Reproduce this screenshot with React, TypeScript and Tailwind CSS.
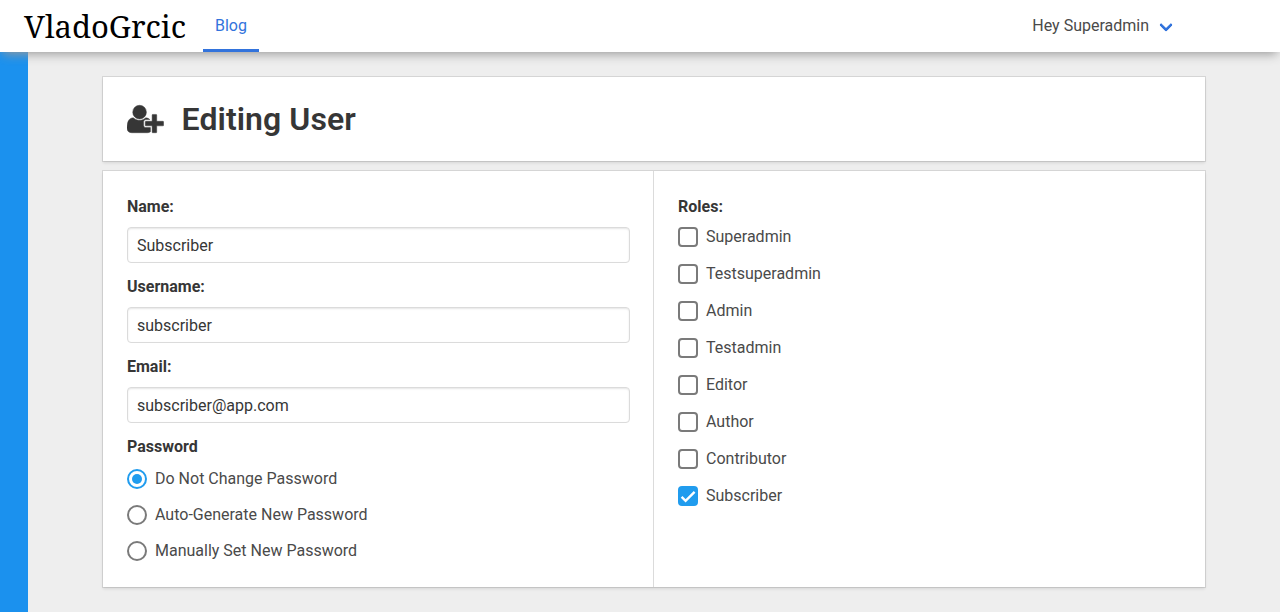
const fields = [
  { label: "Name:", value: "Subscriber" },
  { label: "Username:", value: "subscriber" },
  { label: "Email:", value: "subscriber@app.com" },
];

const passwordOptions = [
  { label: "Do Not Change Password", selected: true },
  { label: "Auto-Generate New Password", selected: false },
  { label: "Manually Set New Password", selected: false },
];

const roles = [
  "Superadmin",
  "Testsuperadmin",
  "Admin",
  "Testadmin",
  "Editor",
  "Author",
  "Contributor",
  "Subscriber",
];

const cardShadow = "bg-white shadow-[0_2px_3px_rgba(10,10,10,0.1),0_0_0_1px_rgba(10,10,10,0.1)]";

function UserPlusIcon() {
  return (
    <svg className="mt-[-1px] h-8 w-[36.57px]" viewBox="0 0 2048 1792" fill="currentColor" stroke="currentColor" strokeWidth="26" aria-hidden="true">
      <path d="M704 896q-159 0-271.5-112.5t-112.5-271.5 112.5-271.5 271.5-112.5 271.5 112.5 112.5 271.5-112.5 271.5-271.5 112.5zm960 128h352q13 0 22.5 9.5t9.5 22.5v192q0 13-9.5 22.5t-22.5 9.5h-352v352q0 13-9.5 22.5t-22.5 9.5h-192q-13 0-22.5-9.5t-9.5-22.5v-352h-352q-13 0-22.5-9.5t-9.5-22.5v-192q0-13 9.5-22.5t22.5-9.5h352v-352q0-13 9.5-22.5t22.5-9.5h192q13 0 22.5 9.5t9.5 22.5v352zm-736 224q0 52 38 90t90 38h256v238q-68 50-171 50h-874q-121 0-194-69t-73-190q0-53 3.5-103.5t14-109 26.5-108.5 43-97.5 62-81 85.5-53.5 111.5-20q19 0 39 17 79 61 154.5 91.5t164.5 30.5 164.5-30.5 154.5-91.5q20-17 39-17 132 0 217 96h-223q-52 0-90 38t-38 90v192z" />
    </svg>
  );
}

function Navbar() {
  return (
    <nav className="relative z-10 flex h-[52px] items-stretch bg-white shadow-[0_5px_10px_-3px_#999]">
      <a className="flex w-[203px] items-center pl-5">
        <svg className="h-[52px] w-[176px]" viewBox="0 0 176 52" aria-label="VladoGrcic">
          <text x="4" y="37.5" textLength="162" lengthAdjust="spacingAndGlyphs" className="fill-black font-['Noto_Serif','Liberation_Serif',serif] text-[31px] leading-none">
            VladoGrcic
          </text>
        </svg>
      </a>
      <a className="flex h-[52px] items-center border-b-[3px] border-[#3273dc] px-3 pt-[2px] text-[#3273dc]">Blog</a>
      <div className="ml-auto mr-[109.4px] flex items-center">
        <span>Hey Superadmin</span>
        <span className="ml-[11.6px] mt-[-3px] size-[10px] -rotate-45 rounded-[2px] border-b-[3px] border-l-[3px] border-[#3273dc]" />
      </div>
    </nav>
  );
}

export default function App() {
  return (
    <div className="flex h-[612px] flex-col overflow-hidden bg-[#eeeeee] font-[Roboto,sans-serif] text-base leading-6 text-[#4a4a4a]">
      <Navbar />
      <div className="flex flex-1">
        <aside className="w-7 bg-[#1b91ee]" />
        <main className="ml-[75px] w-[1102px] pt-[25px]">
          <header className={`flex h-[84px] items-center px-6 text-[#363636] ${cardShadow}`}>
            <UserPlusIcon />
            <h1 className="ml-[18px] text-[32px] leading-9 font-semibold tracking-[0.08px]">Editing User</h1>
          </header>
          <section className={`mt-[10px] grid h-[416px] grid-cols-2 ${cardShadow}`}>
            <div className="border-r border-[#dbdbdb] py-6 pr-[23px] pl-6">
              {fields.map((field) => (
                <label key={field.label} className="mb-[-1px] flex h-[81px] flex-col">
                  <span className="mb-2 font-bold text-[#363636]">{field.label}</span>
                  <input
                    readOnly
                    value={field.value}
                    className="h-9 w-full rounded-[4px] border border-[#dbdbdb] bg-white px-[9px] text-[#363636] shadow-[inset_0_1px_2px_rgba(10,10,10,0.1)] outline-none"
                  />
                </label>
              ))}
              <div className="font-bold text-[#363636]">Password</div>
              <div className="mt-2 flex flex-col gap-3">
                {passwordOptions.map((option) => (
                  <label key={option.label} className="flex items-center">
                    <span className={option.selected ? "flex size-5 items-center justify-center rounded-full border-2 border-[#209cee]" : "size-5 rounded-full border-2 border-[#7a7a7a]"}>
                      {option.selected && <span className="size-[10px] rounded-full bg-[#209cee]" />}
                    </span>
                    <span className="ml-2">{option.label}</span>
                  </label>
                ))}
              </div>
            </div>
            <div className="p-6">
              <div className="font-bold text-[#363636]">Roles:</div>
              <div className="mt-[6px] flex flex-col gap-[13px]">
                {roles.map((role) => (
                  <label key={role} className="flex items-center">
                    {role === "Subscriber" ? (
                      <span className="size-5 rounded-[4px] bg-[#209cee]">
                        <svg viewBox="0 0 20 20" className="size-5" fill="none" stroke="white" strokeWidth="2.4">
                          <path d="M3.6 10.8 7.6 14.8 16.6 5.8" />
                        </svg>
                      </span>
                    ) : (
                      <span className="size-5 rounded-[4px] border-2 border-[#7a7a7a]" />
                    )}
                    <span className="ml-2">{role}</span>
                  </label>
                ))}
              </div>
            </div>
          </section>
        </main>
      </div>
    </div>
  );
}
